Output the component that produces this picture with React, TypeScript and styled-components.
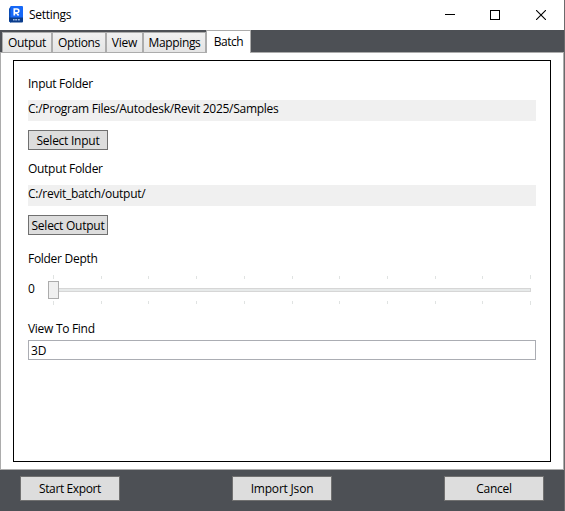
import React from 'react';
import styled, { createGlobalStyle } from 'styled-components';

const GlobalStyle = createGlobalStyle`
  *, *::before, *::after { box-sizing: border-box; }
  body { margin: 0; background: #fff; overflow: hidden; }
  button, input { font: inherit; color: inherit; border-radius: 0; }
`;

const Window = styled.div`
  width: 565px;
  height: 511px;
  display: flex;
  flex-direction: column;
  background: #4d5055;
  border-right: 1px solid #6b6a6c;
  font: 12px/16px 'Open Sans', 'Noto Sans', sans-serif;
  letter-spacing: -0.29px;
  color: #000;
`;

const TitleBar = styled.header`
  height: 30px;
  flex: none;
  display: flex;
  align-items: center;
  background: #fff;
  padding-left: 8px;
`;

const Title = styled.span`
  flex: 1;
  margin-left: 5px;
`;

const Caption = styled.div<{ $nudge?: number }>`
  width: 46px;
  height: 30px;
  display: flex;
  align-items: center;
  justify-content: center;
  padding-left: ${p => p.$nudge ?? 0}px;
`;

const TabStrip = styled.nav`
  height: 22px;
  flex: none;
  display: flex;
  align-items: flex-end;
  padding-left: 2px;
`;

const Tab = styled.div<{ $w: number; $active?: boolean; $ls?: number }>`
  width: ${p => p.$w}px;
  height: ${p => (p.$active ? 23 : 20)}px;
  margin-bottom: ${p => (p.$active ? -1 : 0)}px;
  padding-top: ${p => (p.$active ? 3 : 2)}px;
  border: 1px solid #acacac;
  border-bottom: 0;
  background: ${p => (p.$active ? '#fff' : 'linear-gradient(#f0f0f0, #e5e5e5)')};
  text-align: center;
  white-space: nowrap;
  letter-spacing: ${p => p.$ls ?? -0.35}px;
  position: relative;
`;

const Pane = styled.main`
  height: 418px;
  flex: none;
  background: #fff;
  border: 1px solid #acacac;
  padding: 7px 12px;
`;

const Group = styled.section`
  width: 538px;
  height: 402px;
  border: 1px solid #000;
  padding: 15px 14px 0;
`;

const Label = styled.div`
  display: block;
  height: 16px;
  white-space: nowrap;
`;

const PathBox = styled.div`
  height: 21px;
  margin-top: 8px;
  padding-top: 1px;
  background: #f0f0f0;
  white-space: nowrap;
  letter-spacing: -0.27px;
`;

const Button = styled.button<{ $w: number; $h: number; $ls?: number }>`
  display: block;
  width: ${p => p.$w}px;
  height: ${p => p.$h}px;
  padding: 1px 0 0;
  background: #ddd;
  border: 1px solid #707070;
  line-height: 16px;
  white-space: nowrap;
  letter-spacing: ${p => p.$ls ?? -0.25}px;
`;

const FolderBlock = styled.div`
  height: 85px;
  ${Button} { margin-top: 9px; }
`;

const DepthBlock = styled.div`
  height: 75px;
  padding-top: 5px;
`;

const DepthRow = styled.div`
  display: flex;
  height: 31px;
  margin-top: 8px;
`;

const DepthValue = styled.span`
  width: 20px;
  padding-top: 6px;
`;

const ViewInput = styled.input`
  display: block;
  width: 508px;
  height: 20px;
  margin-top: 3px;
  padding: 0 2px;
  border: 1px solid #abadb3;
  background: #fff;
  outline: none;
`;

const Footer = styled.footer`
  flex: 1;
  display: flex;
  justify-content: space-between;
  padding: 6px 20px 0;
`;

const ticks = [5, 53, 100, 148, 196, 244, 291, 339, 387, 434, 482];

const DepthSlider = () => (
  <svg width="488" height="31" shapeRendering="crispEdges">
    {ticks.map((x, i) => {
      const edge = i === 0 || i === ticks.length - 1;
      return (
        <g key={x} fill="#e0e3e2">
          <rect x={x} y={edge ? 0 : 1} width="1" height={edge ? 4 : 3} />
          <rect x={x} y="26" width="1" height={edge ? 4 : 3} />
        </g>
      );
    })}
    <rect x="5.5" y="13.5" width="477" height="3" fill="#e7eaea" stroke="#d6d6d6" />
    <rect x="0.5" y="6.5" width="10" height="17" fill="#f0f0f0" stroke="#acacac" />
  </svg>
);

const AppIcon = () => (
  <svg width="16" height="18" viewBox="0 0 16 18">
    <path d="M1 2.5 3 .5V17l-2-1.5z" fill="#0b4db5" />
    <path d="M2.5 0H14q1 0 1 1v11.5H2.5z" fill="#1668f7" />
    <path d="M1 11.5h14V15.5q0 1-1 1H3l-2-1.5z" fill="#0a3c8c" />
    <path d="M6.3 9.6V3h2.6a1.8 1.8 0 0 1 0 3.8H6.3M8.5 6.8l2.1 2.8" fill="none" stroke="#fff" strokeWidth="1.7" />
    <path d="M5 13.8h1.6M7.2 13.8h1.8M9.8 13.8h2" stroke="#9db8df" strokeWidth="1.4" />
  </svg>
);

export default function App() {
  return (
    <>
      <GlobalStyle />
      <Window>
        <TitleBar>
          <AppIcon />
          <Title>Settings</Title>
          <Caption $nudge={2}>
            <svg width="10" height="10" shapeRendering="crispEdges"><path d="M0 4.5h10" stroke="#000" /></svg>
          </Caption>
          <Caption>
            <svg width="10" height="10" shapeRendering="crispEdges"><path d="M.5.5h9v9h-9z" fill="none" stroke="#000" /></svg>
          </Caption>
          <Caption>
            <svg width="10" height="10"><path d="M0 0l10 10M10 0L0 10" stroke="#000" strokeWidth="1.1" /></svg>
          </Caption>
        </TitleBar>
        <TabStrip>
          <Tab $w={50}>Output</Tab>
          <Tab $w={54}>Options</Tab>
          <Tab $w={37} $ls={-0.2}>View</Tab>
          <Tab $w={63}>Mappings</Tab>
          <Tab $w={45} $active $ls={-0.5}>Batch</Tab>
        </TabStrip>
        <Pane>
          <Group>
            <FolderBlock>
              <Label>Input Folder</Label>
              <PathBox>C:/Program Files/Autodesk/Revit 2025/Samples</PathBox>
              <Button $w={80} $h={20}>Select Input</Button>
            </FolderBlock>
            <FolderBlock>
              <Label>Output Folder</Label>
              <PathBox>C:/revit_batch/output/</PathBox>
              <Button $w={80} $h={20}>Select Output</Button>
            </FolderBlock>
            <DepthBlock>
              <Label>Folder Depth</Label>
              <DepthRow>
                <DepthValue>0</DepthValue>
                <DepthSlider />
              </DepthRow>
            </DepthBlock>
            <Label as="label" htmlFor="view">View To Find</Label>
            <ViewInput id="view" defaultValue="3D" />
          </Group>
        </Pane>
        <Footer>
          <Button $w={100} $h={25} $ls={-0.38}>Start Export</Button>
          <Button $w={100} $h={25} $ls={-0.2}>Import Json</Button>
          <Button $w={100} $h={25} $ls={-0.3}>Cancel</Button>
        </Footer>
      </Window>
    </>
  );
}
